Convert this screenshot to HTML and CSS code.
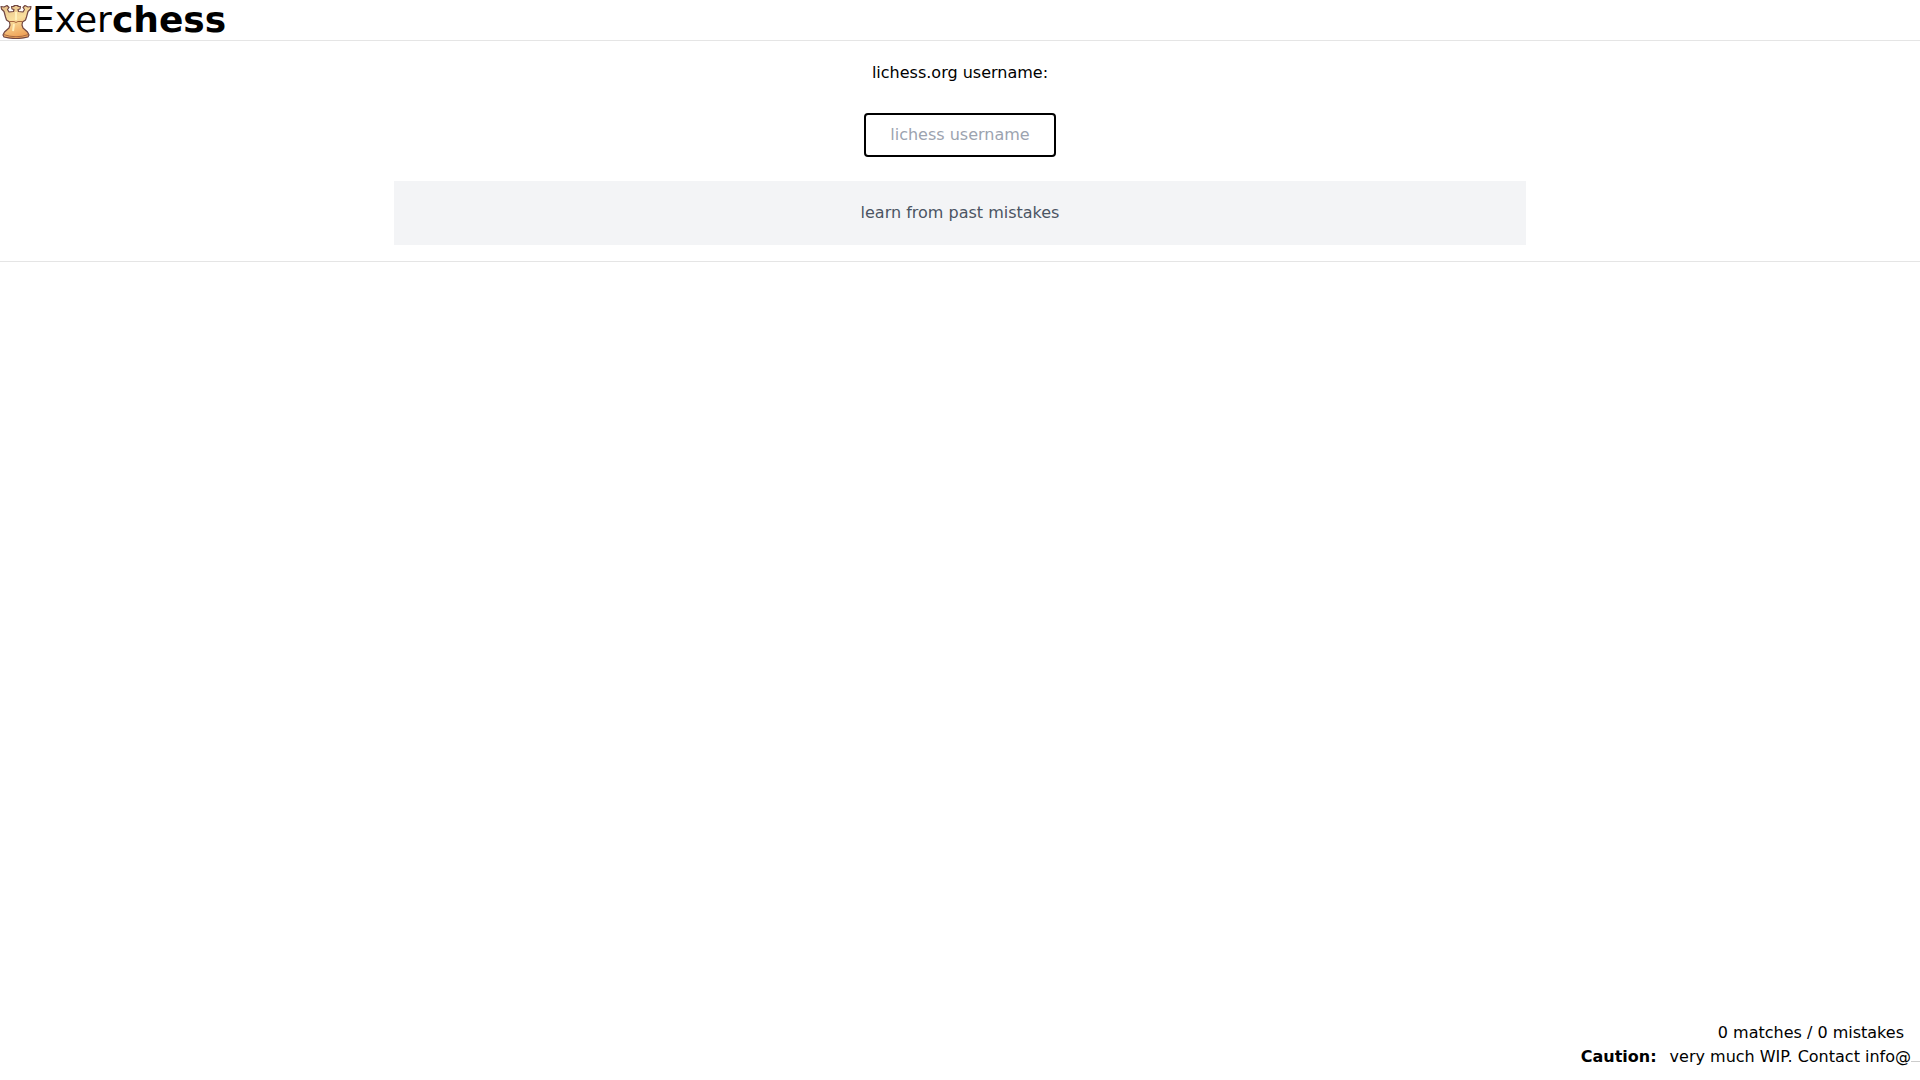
FILE: index.html
```
<!DOCTYPE html>
<html lang="en">
<head>
  <meta charset="UTF-8" />
  <meta name="viewport" content="width=device-width, initial-scale=1" />
  <title>Exerchess</title>
  <link rel="stylesheet" href="styles.css">
</head>
<body>

  <header class="header">
    <svg class="logo" viewBox="0 0 32 36" aria-hidden="true">
      <defs>
        <linearGradient id="gold" x1="0" y1="0" x2="0.3" y2="1">
          <stop offset="0" stop-color="#e6bd88" />
          <stop offset="0.5" stop-color="#f9df9e" />
          <stop offset="1" stop-color="#f0a65c" />
        </linearGradient>
      </defs>
      <path d="M1 3.500L4 4L7 2.500L9 4.500L7.500 6.500L9 9L13.500 8.500L14 6.500L12 6L11.500 3.500L14 3.500L14 2.500L18 2.500L18 3.500L20.500 3.500L20 6L18 6.500L18.500 8.500L23 9L24.500 6.500L23 4.500L25 2.500L28 4L31 3.500L30.500 6L28 8.500L26.500 14L25.500 17L22.500 19L22 22L23 25L27.500 29L29 32L28 34Q16 37 4 34L3 32L4.500 29L9 25L10 22L9.500 19L6.500 17L5.500 14L4 8.500L1.500 6Z"
        fill="url(#gold)" stroke="#704642" stroke-width="1.200" stroke-linejoin="round" />
      <path d="M9.500 18.500L14 18.500L16 19.500L18 18.500L22.500 18.500M3.500 31.500Q16 36 28.500 31.500" fill="none" stroke="#a9683f" stroke-width="1" />
      <path d="M16 9L16 17M14 21L13 28" fill="none" stroke="#fff0bc" stroke-width="2" />
    </svg>
    <h1 class="title">Exer<b>chess</b></h1>
  </header>

  <main class="main">
    <form class="user-form">
      <label for="username">lichess.org username:</label>
      <input class="username" id="username" type="text" placeholder="lichess username" />
      <button class="learn-btn" type="button">learn from past mistakes</button>
    </form>
  </main>

  <footer class="footer">
    <p class="stats">0 matches / 0 mistakes</p>
    <p class="notice"><b>Caution:</b><span>very much WIP. Contact info@</span><span class="mail-end"></span></p>
  </footer>

</body>
</html>
```
FILE: styles.css
```
* {
  box-sizing: border-box;
}
body {
  margin: 0;
  min-height: 100vh;
  display: flex;
  flex-direction: column;
  font-family: "DejaVu Sans", sans-serif;
  font-size: 16px;
  line-height: 24px;
  background: #fff;
  color: #000;
}

/* Header */
.header {
  display: flex;
  align-items: center;
  border-bottom: 1px solid #e5e5e5;
}
.logo {
  width: 32px;
  height: 36px;
  margin-top: 2px;
}
.title {
  margin: 0;
  font-size: 36px;
  line-height: 40px;
  font-weight: 400;
}

/* Username form */
.main {
  flex: 1;
}
.user-form {
  display: flex;
  flex-direction: column;
  align-items: center;
  padding: 20px 0 16px;
  border-bottom: 1px solid #e5e5e5;
}
.username {
  width: 192px;
  height: 44px;
  margin: 28px 0 24px;
  padding: 7px 8px 9px;
  border: 2px solid #000;
  border-radius: 4px;
  font: inherit;
  text-align: center;
}
.username::placeholder {
  color: #9ca3af;
  opacity: 1;
}
.learn-btn {
  width: 59%;
  padding: 20px 16px;
  border: none;
  background: #f3f4f6;
  color: #4b5563;
  font: inherit;
  cursor: pointer;
}

/* Footer */
.footer {
  padding-bottom: 11px;
  text-align: right;
}
.stats,
.notice {
  margin: 0;
}
.stats {
  padding-right: 16px;
}
.notice {
  display: flex;
  justify-content: flex-end;
}
.notice b {
  margin-right: 13px;
}
.mail-end {
  width: 9px;
  height: 17px;
  border-bottom: 1px solid #ccc;
}
```
